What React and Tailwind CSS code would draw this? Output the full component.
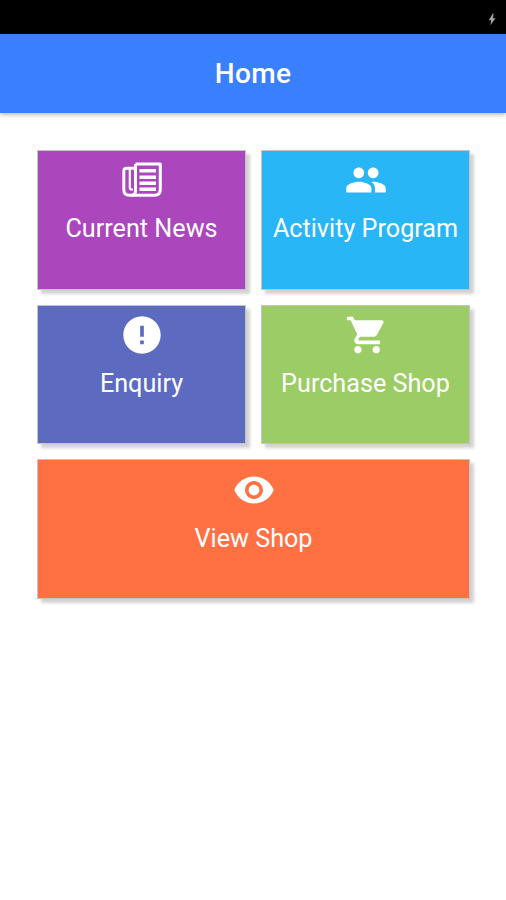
import React from 'react';
import clsx from 'clsx';

const NewsIcon = () => (
  <svg viewBox="0 0 44 44" className="w-11 h-11" fill="none" stroke="currentColor" strokeWidth="3" strokeLinejoin="round">
    <path d="M15.5 6H40.3V31.5Q40.3 37.2 34.5 37.2H9.5Q3.8 37.2 3.8 31.5V13Q3.8 10.2 6.8 10.2H15.5" />
    <path d="M15.5 6V33Q15.5 37.2 11.5 37.2" />
    <path d="M9.8 11V29.5Q9.8 31.5 11.6 31.5H13" strokeWidth="2.2" />
    <path d="M19.5 12.7H36M19.5 19.2H36M19.5 25.2H36M19.5 31.2H36" strokeWidth="3.4" />
  </svg>
);

const PeopleIcon = () => (
  <svg viewBox="0 0 24 24" className="w-11 h-11 p-[0.5px]" fill="currentColor">
    <path d="M16 11c1.66 0 2.99-1.34 2.99-3S17.66 5 16 5c-1.66 0-3 1.34-3 3s1.34 3 3 3zm-8 0c1.66 0 2.99-1.34 2.99-3S9.66 5 8 5C6.34 5 5 6.34 5 8s1.34 3 3 3zm0 2c-2.33 0-7 1.17-7 3.5V19h14v-2.5c0-2.33-4.67-3.5-7-3.5zm8 0c-.29 0-.62.02-.97.05 1.16.84 1.97 1.97 1.97 3.45V19h6v-2.5c0-2.33-4.67-3.5-7-3.5z" />
  </svg>
);

const AlertIcon = () => (
  <svg viewBox="0 0 24 24" className="w-11 h-11" fill="currentColor">
    <path d="M12 1.8C6.37 1.8 1.8 6.37 1.8 12S6.37 22.2 12 22.2 22.2 17.63 22.2 12 17.63 1.8 12 1.8zm1 15.2h-2v-2h2v2zm0-4h-2V7h2v6z" />
  </svg>
);

const CartIcon = () => (
  <svg viewBox="-0.6 0 24 24" className="w-11 h-11" fill="currentColor">
    <path d="M7 18c-1.1 0-1.99.9-1.99 2S5.9 22 7 22s2-.9 2-2-.9-2-2-2zM1 2v2h2l3.6 7.59-1.35 2.45c-.16.28-.25.61-.25.96 0 1.1.9 2 2 2h12v-2H7.42c-.14 0-.25-.11-.25-.25l.03-.12.9-1.63h7.45c.75 0 1.41-.41 1.75-1.03l3.58-6.49c.08-.14.12-.31.12-.48 0-.55-.45-1-1-1H5.21l-.94-2H1zm16 16c-1.1 0-1.99.9-1.99 2s.89 2 1.99 2 2-.9 2-2-.9-2-2-2z" />
  </svg>
);

const EyeIcon = () => (
  <svg viewBox="0 0 24 24" className="w-11 h-11 p-[0.5px]" fill="currentColor">
    <path d="M12 4.5C7 4.5 2.73 7.61 1 12c1.73 4.39 6 7.5 11 7.5s9.27-3.11 11-7.5c-1.73-4.39-6-7.5-11-7.5zM12 17c-2.76 0-5-2.24-5-5s2.24-5 5-5 5 2.24 5 5-2.24 5-5 5zm0-8c-1.66 0-3 1.34-3 3s1.34 3 3 3 3-1.34 3-3-1.34-3-3-3z" />
  </svg>
);

const tiles = [
  { label: 'Current News', icon: NewsIcon, color: 'bg-[#ab47bc]' },
  { label: 'Activity Program', icon: PeopleIcon, color: 'bg-[#29b6f6]' },
  { label: 'Enquiry', icon: AlertIcon, color: 'bg-[#5c6bc0]' },
  { label: 'Purchase Shop', icon: CartIcon, color: 'bg-[#9ccc65]' },
  { label: 'View Shop', icon: EyeIcon, color: 'bg-[#ff7043]', wide: true }
];

const App = () => {
  return (
    <div className="min-h-screen bg-white font-['Roboto',sans-serif] text-white">

      {/* Status bar */}
      <div className="h-[34px] bg-black flex items-center justify-end pr-[10px] pt-1">
        <svg viewBox="0 0 8 13" className="w-2 h-[13px] text-[#a3a3a3]" fill="currentColor">
          <path d="M4.8 0.5L0.8 7.2H3.2L2.4 12.3L7.5 5.2H5L5.6 0.5Z" />
        </svg>
      </div>

      {/* Header */}
      <header className="h-[79px] bg-[#3880ff] flex items-center justify-center pt-px shadow-[0_2px_4px_rgba(0,0,0,0.25)]">
        <h1 className="text-[28px] font-medium tracking-[0.4px]">Home</h1>
      </header>

      {/* Menu tiles */}
      <main className="grid grid-cols-2 gap-x-[15px] gap-y-[15.1px] pt-[37px] pl-[37px] pr-9">
        {tiles.map(({ label, icon: Icon, color, wide }) => (
          <button
            key={label}
            className={clsx(
              'h-[139.6px] flex flex-col items-center border border-[#c4c4c4] pt-[7.3px] shadow-[4px_4px_3px_rgba(0,0,0,0.18)]',
              color,
              wide && 'col-span-2'
            )}
          >
            <Icon />
            <span className="mt-[11.2px] text-[25.2px] leading-8 whitespace-nowrap">{label}</span>
          </button>
        ))}
      </main>

    </div>
  );
};

export default App;
